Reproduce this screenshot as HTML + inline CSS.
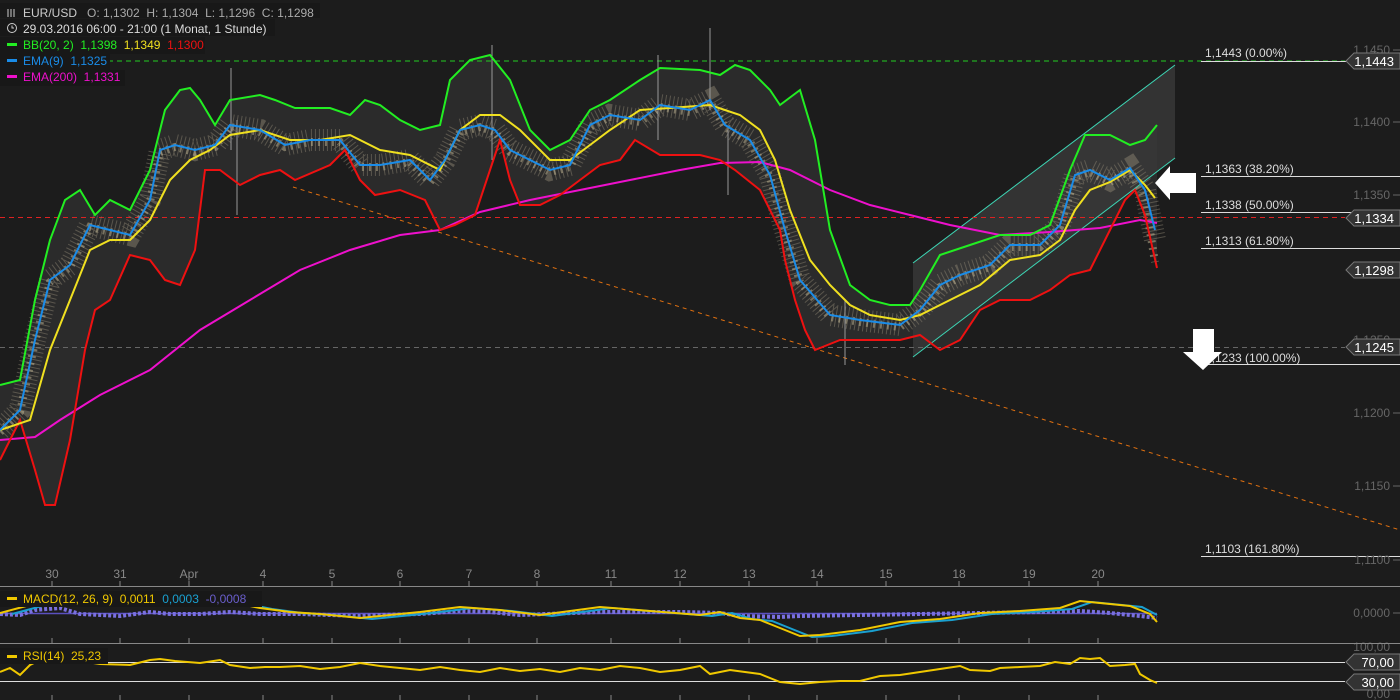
<!DOCTYPE html>
<html><head><meta charset="utf-8">
<style>
html,body{margin:0;padding:0;background:#1c1c1c;overflow:hidden}
svg{display:block;font-family:"Liberation Sans",sans-serif}
text{white-space:pre}
</style></head>
<body>
<svg width="1400" height="700" xmlns="http://www.w3.org/2000/svg">
<rect width="1400" height="700" fill="#1c1c1c"/>
<polygon fill="#2b2b2b" points="0,385 20,380 35,300 50,240 65,200 80,190 95,215 110,200 130,210 150,170 165,110 180,90 190,88 200,100 215,125 230,100 260,95 275,100 295,108 330,108 350,115 365,100 380,105 400,120 420,130 440,125 450,80 470,60 490,55 510,80 530,130 550,150 570,140 590,110 610,100 640,80 660,68 700,70 720,75 735,65 750,70 770,90 780,105 800,90 815,140 830,230 850,285 870,300 890,305 910,305 920,290 940,255 970,245 1000,235 1030,235 1050,225 1070,170 1085,135 1110,135 1130,145 1145,140 1157,125 1157,268 1145,215 1135,190 1125,200 1110,230 1090,270 1070,275 1050,290 1030,300 1000,300 980,310 960,340 940,350 920,335 900,340 870,340 840,340 815,350 805,330 795,300 785,260 780,230 760,190 735,170 720,160 700,155 660,155 635,140 620,160 600,165 580,180 560,195 540,205 520,205 510,180 500,140 490,170 475,215 455,225 440,230 425,200 400,190 375,195 360,180 345,150 330,165 295,180 280,170 260,175 240,185 220,170 205,170 195,250 180,285 165,280 150,260 130,255 110,300 95,310 85,350 70,440 55,505 45,505 35,470 20,420 0,460"/>
<polygon points="913,263 1175,65 1175,158 913,357" fill="#3a3a3a" opacity="0.8"/>
<line x1="913" y1="263" x2="1175" y2="65" stroke="#3dd6b5"/>
<line x1="913" y1="357" x2="1175" y2="158" stroke="#3dd6b5"/>
<line x1="293" y1="187" x2="1400" y2="530" stroke="#e07010" stroke-dasharray="4,4"/>
<line x1="0" y1="61" x2="1345" y2="61" stroke="#22cc22" stroke-dasharray="5,4"/>
<line x1="0" y1="217.5" x2="1345" y2="217.5" stroke="#dd2222" stroke-dasharray="5,4"/>
<line x1="0" y1="347.5" x2="1345" y2="347.5" stroke="#666" stroke-dasharray="5,4"/>

<polyline fill="none" stroke="#8a8270" stroke-width="22" stroke-dasharray="1,3" opacity="0.5" points="0,430 20,410 35,340 50,280 70,265 90,225 110,230 130,235 150,200 160,150 175,145 195,150 215,145 230,125 260,130 285,145 310,140 340,140 360,165 380,165 410,160 430,180 445,160 460,130 480,125 495,130 510,150 530,160 550,170 570,165 590,125 610,115 640,120 660,105 690,110 710,100 725,125 750,140 770,175 785,230 800,280 830,315 860,320 900,325 920,310 940,285 960,275 990,265 1010,245 1040,245 1060,225 1075,175 1090,170 1110,180 1130,168 1145,190 1155,240"/>
<polyline fill="none" stroke="#c8bc98" stroke-width="8" stroke-dasharray="2,5" opacity="0.5" points="0,432 20,412 35,342 50,282 70,267 90,227 110,232 130,237 150,202 160,152 175,147 195,152 215,147 230,127 260,132 285,147 310,142 340,142 360,167 380,167 410,162 430,182 445,162 460,132 480,127 495,132 510,152 530,162 550,172 570,167 590,127 610,117 640,122 660,107 690,112 710,102 725,127 750,142 770,177 785,232 800,282 830,317 860,322 900,327 920,312 940,287 960,277 990,267 1010,247 1040,247 1060,227 1075,177 1090,172 1110,182 1130,170 1145,200 1155,262"/>
<g stroke="#999"><line x1="231" y1="68" x2="231" y2="150"/><line x1="492" y1="45" x2="492" y2="160"/><line x1="658" y1="55" x2="658" y2="140"/><line x1="710" y1="28" x2="710" y2="110"/><line x1="237" y1="120" x2="237" y2="215"/><line x1="845" y1="300" x2="845" y2="365"/><line x1="728" y1="130" x2="728" y2="195"/></g>

<polyline fill="none" stroke="#ee10cc" stroke-width="2" points="0,440 35,437 60,420 100,395 150,370 200,330 250,300 300,270 350,250 400,235 440,230 480,212 530,200 580,190 630,180 680,170 720,163 760,162 790,170 830,190 870,205 910,215 950,225 1000,235 1050,232 1100,228 1140,220 1157,223"/>
<polyline fill="none" stroke="#22ee22" stroke-width="2" points="0,385 20,380 35,300 50,240 65,200 80,190 95,215 110,200 130,210 150,170 165,110 180,90 190,88 200,100 215,125 230,100 260,95 275,100 295,108 330,108 350,115 365,100 380,105 400,120 420,130 440,125 450,80 470,60 490,55 510,80 530,130 550,150 570,140 590,110 610,100 640,80 660,68 700,70 720,75 735,65 750,70 770,90 780,105 800,90 815,140 830,230 850,285 870,300 890,305 910,305 920,290 940,255 970,245 1000,235 1030,235 1050,225 1070,170 1085,135 1110,135 1130,145 1145,140 1157,125"/>
<polyline fill="none" stroke="#ee1111" stroke-width="2" points="1157,268 1145,215 1135,190 1125,200 1110,230 1090,270 1070,275 1050,290 1030,300 1000,300 980,310 960,340 940,350 920,335 900,340 870,340 840,340 815,350 805,330 795,300 785,260 780,230 760,190 735,170 720,160 700,155 660,155 635,140 620,160 600,165 580,180 560,195 540,205 520,205 510,180 500,140 490,170 475,215 455,225 440,230 425,200 400,190 375,195 360,180 345,150 330,165 295,180 280,170 260,175 240,185 220,170 205,170 195,250 180,285 165,280 150,260 130,255 110,300 95,310 85,350 70,440 55,505 45,505 35,470 20,420 0,460"/>
<polyline fill="none" stroke="#f0e020" stroke-width="2" points="0,430 30,420 50,350 70,300 90,250 110,240 130,240 150,220 170,180 190,160 210,150 230,135 260,130 290,140 320,140 350,135 380,150 410,155 440,170 460,130 480,115 500,115 520,130 550,160 570,160 590,145 610,130 640,110 670,108 710,105 740,115 760,130 775,160 790,210 810,260 830,285 850,305 870,315 900,320 920,315 950,300 980,285 1010,260 1040,255 1060,240 1075,210 1090,190 1110,182 1130,170 1145,185 1155,198"/>
<polyline fill="none" stroke="#1a8ce8" stroke-width="2" points="0,430 20,410 35,340 50,280 70,265 90,225 110,230 130,235 150,200 160,150 175,145 195,150 215,145 230,125 260,130 285,145 310,140 340,140 360,165 380,165 410,160 430,180 445,160 460,130 480,125 495,130 510,150 530,160 550,170 570,165 590,125 610,115 640,120 660,105 690,110 710,100 725,125 750,140 770,175 785,230 800,280 830,315 860,320 900,325 920,310 940,285 960,275 990,265 1010,245 1040,245 1060,225 1075,175 1090,170 1110,180 1130,168 1145,190 1155,230"/>

<g stroke="#ddd">
<line x1="1201" y1="61.5" x2="1400" y2="61.5"/><line x1="1201" y1="176.5" x2="1400" y2="176.5"/><line x1="1201" y1="212.5" x2="1400" y2="212.5"/><line x1="1201" y1="248.5" x2="1400" y2="248.5"/><line x1="1201" y1="364.5" x2="1400" y2="364.5"/><line x1="1201" y1="556.5" x2="1400" y2="556.5"/>
</g>
<g fill="#ddd" font-size="12">
<text x="1205" y="57">1,1443 (0.00%)</text><text x="1205" y="173">1,1363 (38.20%)</text><text x="1205" y="209">1,1338 (50.00%)</text><text x="1205" y="245">1,1313 (61.80%)</text><text x="1205" y="362">1,1233 (100.00%)</text><text x="1205" y="553">1,1103 (161.80%)</text>
</g>
<g fill="#666" font-size="12" text-anchor="end">
<text x="1390" y="54">1,1450</text><text x="1390" y="126">1,1400</text><text x="1390" y="199">1,1350</text><text x="1390" y="344">1,1250</text><text x="1390" y="417">1,1200</text><text x="1390" y="490">1,1150</text><text x="1390" y="564">1,1100</text><text x="1390" y="617">0,0000</text><text x="1390" y="651">100,00</text><text x="1390" y="698">0,00</text>
</g>
<g stroke="#666"><line x1="1393" y1="50" x2="1400" y2="50"/><line x1="1393" y1="122" x2="1400" y2="122"/><line x1="1393" y1="195" x2="1400" y2="195"/><line x1="1393" y1="413" x2="1400" y2="413"/><line x1="1393" y1="486" x2="1400" y2="486"/><line x1="1393" y1="560" x2="1400" y2="560"/><line x1="1393" y1="613" x2="1400" y2="613"/></g>
<polygon points="1155,183 1170,166 1170,173 1196,173 1196,193 1170,193 1170,200" fill="#fff"/>
<polygon points="1193,329 1214,329 1214,352 1222,352 1203,370 1183,352 1193,352" fill="#fff"/>

<g font-size="13" fill="#fff" text-anchor="end">
<polygon points="1346,61 1354,53 1400,53 1400,69 1354,69" fill="#333" stroke="#777"/><text x="1394" y="66">1,1443</text>
<polygon points="1346,218 1354,210 1400,210 1400,226 1354,226" fill="#333" stroke="#777"/><text x="1394" y="223">1,1334</text>
<polygon points="1346,270 1354,262 1400,262 1400,278 1354,278" fill="#333" stroke="#777"/><text x="1394" y="275">1,1298</text>
<polygon points="1346,347 1354,339 1400,339 1400,355 1354,355" fill="#333" stroke="#777"/><text x="1394" y="352">1,1245</text>
<polygon points="1346,662 1354,654 1400,654 1400,670 1354,670" fill="#333" stroke="#777"/><text x="1394" y="667">70,00</text>
<polygon points="1346,682 1354,674 1400,674 1400,690 1354,690" fill="#333" stroke="#777"/><text x="1394" y="687">30,00</text>
</g>

<line x1="0" y1="586.5" x2="1400" y2="586.5" stroke="#888"/>
<line x1="0" y1="643.5" x2="1400" y2="643.5" stroke="#888"/>
<g fill="#888" font-size="12" text-anchor="middle">
<text x="52" y="578">30</text><text x="120" y="578">31</text><text x="189" y="578">Apr</text><text x="263" y="578">4</text><text x="332" y="578">5</text><text x="400" y="578">6</text><text x="469" y="578">7</text><text x="537" y="578">8</text><text x="611" y="578">11</text><text x="680" y="578">12</text><text x="749" y="578">13</text><text x="817" y="578">14</text><text x="886" y="578">15</text><text x="959" y="578">18</text><text x="1029" y="578">19</text><text x="1098" y="578">20</text>
</g>
<g stroke="#888" stroke-dasharray="5,52" >
<line x1="52" y1="581" x2="52" y2="700"/><line x1="120" y1="581" x2="120" y2="700"/><line x1="189" y1="581" x2="189" y2="700"/><line x1="263" y1="581" x2="263" y2="700"/><line x1="332" y1="581" x2="332" y2="700"/><line x1="400" y1="581" x2="400" y2="700"/><line x1="469" y1="581" x2="469" y2="700"/><line x1="537" y1="581" x2="537" y2="700"/><line x1="611" y1="581" x2="611" y2="700"/><line x1="680" y1="581" x2="680" y2="700"/><line x1="749" y1="581" x2="749" y2="700"/><line x1="817" y1="581" x2="817" y2="700"/><line x1="886" y1="581" x2="886" y2="700"/><line x1="959" y1="581" x2="959" y2="700"/><line x1="1029" y1="581" x2="1029" y2="700"/><line x1="1098" y1="581" x2="1098" y2="700"/>
</g>
<line x1="0" y1="662.5" x2="1345" y2="662.5" stroke="#ddd"/>
<line x1="0" y1="681.5" x2="1345" y2="681.5" stroke="#ddd"/>

<line x1="0" y1="613.5" x2="1157" y2="613.5" stroke="#5a50c0" stroke-width="1.5"/>
<polyline fill="none" stroke="#7a70e0" stroke-width="4" stroke-dasharray="3,2" points="0,614 20,615 35,610 60,608 80,614 120,616 150,612 170,614 200,614 230,612 260,614 300,614 330,615 360,616 380,615 420,614 460,611 490,612 520,615 600,612 680,612 720,613 740,616 780,617 800,616 1040,612 1080,611 1110,613 1140,616 1157,618"/>
<polyline fill="none" stroke="#1aa0d0" stroke-width="2" points="12,614 42,606 72,604 112,599 152,601 202,605 242,603 272,609 302,613 332,615 372,619 392,617 432,613 472,608 512,611 552,616 612,608 662,612 712,616 732,613 752,619 772,621 792,629 812,637 832,636 872,631 912,623 952,620 992,614 1032,612 1072,609 1092,602 1112,604 1142,607 1157,615"/>
<polyline fill="none" stroke="#f0c800" stroke-width="2" points="0,613 30,605 60,603 100,598 140,600 190,604 230,602 260,608 290,612 320,614 360,618 380,616 420,612 460,607 500,610 540,615 600,607 650,611 700,615 720,612 740,618 760,620 780,628 800,636 820,635 860,630 900,622 940,619 980,613 1020,611 1060,608 1080,601 1100,603 1130,606 1150,614 1157,622"/>
<polyline fill="none" stroke="#f0c800" stroke-width="2" points="0,672 10,668 20,675 30,665 40,660 60,660 80,661 100,664 130,665 150,660 160,659 175,661 200,663 220,660 230,665 250,668 265,667 280,667 300,666 320,669 340,667 360,663 380,666 400,668 420,670 440,667 460,670 480,672 500,668 520,671 540,669 560,672 580,668 600,670 620,666 640,668 660,672 680,670 700,666 710,674 730,670 760,674 780,682 800,684 820,682 840,681 860,681 880,676 900,675 920,672 940,669 960,666 970,670 990,671 1000,668 1020,667 1040,666 1055,662 1070,664 1080,658 1090,659 1100,658 1110,666 1125,665 1135,664 1140,674 1150,680 1157,683"/>

<rect x="0" y="3" width="320" height="15" fill="#181818"/>
<rect x="0" y="19" width="275" height="17" fill="#181818"/>
<rect x="0" y="37" width="205" height="17" fill="#181818"/>
<rect x="0" y="54" width="110" height="16" fill="#181818"/>
<rect x="0" y="70" width="125" height="16" fill="#181818"/>
<g font-size="12">
<g stroke="#ccc"><line x1="8" y1="9" x2="8" y2="17"/><line x1="11" y1="9" x2="11" y2="17"/><line x1="14" y1="9" x2="14" y2="17"/></g>
<text x="23" y="17" fill="#ccc">EUR/USD   <tspan fill="#aaa">O: 1,1302  H: 1,1304  L: 1,1296  C: 1,1298</tspan></text>
<circle cx="12" cy="28" r="4.5" fill="none" stroke="#ccc"/><path d="M12 25.5V28h2" stroke="#ccc" fill="none"/>
<text x="23" y="33" fill="#ddd">29.03.2016 06:00 - 21:00 (1 Monat, 1 Stunde)</text>
<rect x="7" y="43" width="10" height="3" fill="#22ee22"/>
<text x="23" y="49" fill="#22ee22">BB(20, 2)  1,1398  <tspan fill="#f0e020">1,1349</tspan>  <tspan fill="#ee1111">1,1300</tspan></text>
<rect x="7" y="59" width="10" height="3" fill="#1a8ce8"/>
<text x="23" y="65" fill="#1a8ce8">EMA(9)  1,1325</text>
<rect x="7" y="75" width="10" height="3" fill="#ee10cc"/>
<text x="23" y="81" fill="#ee10cc">EMA(200)  1,1331</text>
<rect x="0" y="591" width="262" height="16" fill="#181818"/>
<rect x="7" y="597" width="10" height="3" fill="#f0c800"/>
<text x="23" y="603" fill="#f0c800">MACD(12, 26, 9)  0,0011  <tspan fill="#1aa0d0">0,0003</tspan>  <tspan fill="#6a5ecc">-0,0008</tspan></text>
<rect x="0" y="648" width="108" height="16" fill="#181818"/>
<rect x="7" y="655" width="10" height="3" fill="#f0c800"/>
<text x="23" y="660" fill="#f0c800">RSI(14)  25,23</text>
</g>
</svg>
</body></html>
